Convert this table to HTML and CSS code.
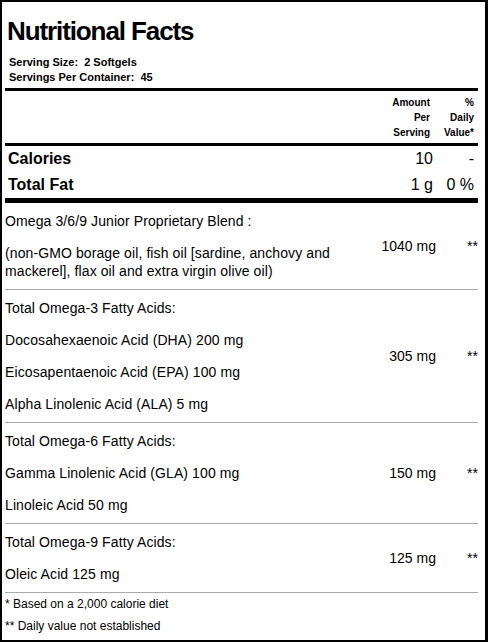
FILE: index.html
```html
<!DOCTYPE html>
<html lang="en">
<head>
    <meta charset="UTF-8">
    <meta name="viewport" content="width=device-width, initial-scale=1.0">
    <title>Nutritional Facts</title>
    <link rel="stylesheet" href="styles.css">
</head>
<body>
    <div class="label">
        <header class="label-head">
            <h1>Nutritional Facts</h1>
            <p>Serving Size:&nbsp; 2 Softgels</p>
            <p>Servings Per Container:&nbsp; 45</p>
        </header>
        <div class="rule thick"></div>

        <div class="row col-head">
            <span></span>
            <span class="amt">Amount<br>Per<br>Serving</span>
            <span class="dv">%<br>Daily<br>Value*</span>
        </div>
        <div class="rule thick"></div>

        <div class="row main">
            <span class="name">Calories</span>
            <span class="amt">10</span>
            <span class="dv">-</span>
        </div>
        <div class="row main">
            <span class="name">Total Fat</span>
            <span class="amt">1 g</span>
            <span class="dv">0 %</span>
        </div>
        <div class="rule thicker"></div>

        <div class="row group">
            <div class="name">
                <p>Omega 3/6/9 Junior Proprietary Blend :</p>
                <p>(non-GMO borage oil, fish oil [sardine, anchovy and mackerel], flax oil and extra virgin olive oil)</p>
            </div>
            <span class="amt">1040 mg</span>
            <span class="dv">**</span>
        </div>
        <div class="rule thin"></div>

        <div class="row group">
            <div class="name">
                <p>Total Omega-3 Fatty Acids:</p>
                <p>Docosahexaenoic Acid (DHA) 200 mg</p>
                <p>Eicosapentaenoic Acid (EPA) 100 mg</p>
                <p>Alpha Linolenic Acid (ALA) 5 mg</p>
            </div>
            <span class="amt">305 mg</span>
            <span class="dv">**</span>
        </div>
        <div class="rule thin"></div>

        <div class="row group">
            <div class="name">
                <p>Total Omega-6 Fatty Acids:</p>
                <p>Gamma Linolenic Acid (GLA) 100 mg</p>
                <p>Linoleic Acid 50 mg</p>
            </div>
            <span class="amt">150 mg</span>
            <span class="dv">**</span>
        </div>
        <div class="rule thin"></div>

        <div class="row group">
            <div class="name">
                <p>Total Omega-9 Fatty Acids:</p>
                <p>Oleic Acid 125 mg</p>
            </div>
            <span class="amt">125 mg</span>
            <span class="dv">**</span>
        </div>
        <div class="rule thin"></div>

        <footer class="notes">
            <p>* Based on a 2,000 calorie diet</p>
            <p>** Daily value not established</p>
        </footer>
    </div>
</body>
</html>
```

FILE: styles.css
```css
body {
    margin: 0;
    font-family: "Liberation Sans", Arial, sans-serif;
    color: #000;
    background-color: #fff;
}
.label {
    height: 642px;
    box-sizing: border-box;
    border: 2px solid #000;
    border-right-width: 3px;
    padding: 0 7px 0 3px;
    overflow: hidden;
}
.label-head h1 {
    margin: 0 0 9px;
    padding: 14px 0 0 2px;
    font-size: 26px;
    line-height: 30px;
    letter-spacing: -1.1px;
}
.label-head p {
    margin: 0;
    padding-left: 4px;
    font-size: 11px;
    font-weight: bold;
    line-height: 15px;
}
.rule {
    background-color: #000;
}
.rule.thick {
    height: 3px;
}
.label-head + .rule {
    margin-top: 3px;
}
.rule.thicker {
    height: 5px;
}
.rule.thin {
    height: 1px;
    background-color: #aaa;
}
.row {
    display: grid;
    grid-template-columns: 1fr 90px 42px;
    align-items: center;
}
.amt,
.dv {
    text-align: right;
}
.col-head {
    padding: 4px 0 3px;
    font-size: 10px;
    font-weight: bold;
    line-height: 15px;
}
.col-head .amt {
    padding-right: 6px;
}
.col-head .dv {
    padding-right: 4px;
}
.main {
    font-size: 16px;
    line-height: 26px;
}
.main .name {
    padding-left: 3px;
    font-weight: bold;
}
.main .amt {
    padding-right: 3px;
}
.main .dv {
    padding-right: 4px;
}
.group {
    padding: 2px 0;
    font-size: 14px;
    line-height: 18px;
}
.group .name {
    letter-spacing: 0.1px;
}
.group p {
    margin: 0;
    padding: 7px 0;
}
.notes p {
    margin: 0;
    font-size: 12px;
    line-height: 22px;
}
```
